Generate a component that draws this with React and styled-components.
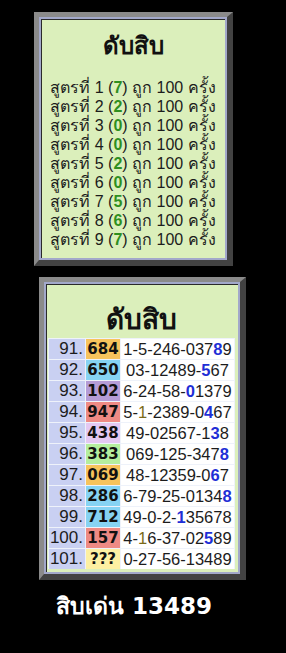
import React from 'react'
import styled, { createGlobalStyle } from 'styled-components'

const Global = createGlobalStyle`
  html, body {
    margin: 0;
    background: #000;
  }
  body {
    font-family: Tahoma, "Liberation Sans", "Noto Sans", sans-serif;
  }
`

const Page = styled.div`
  display: flex;
  flex-direction: column;
  align-items: flex-start;
  padding-top: 12px;
  width: 286px;
  min-height: 653px;
  box-sizing: border-box;
`

const Frame = styled.div`
  box-sizing: border-box;
  width: ${p => p.$w}px;
  margin-left: ${p => p.$left}px;
  margin-bottom: ${p => p.$gap || 0}px;
  border-style: solid;
  border-width: 5px 6px 6px 5px;
  border-color: #8a8a8a #424242 #424242 #8a8a8a;
`

const Inner = styled.div`
  border: 2px solid #a2a8ca;
  box-shadow: inset 1px 1px 0 #2a2a2a;
  background: #dbefbb;
  padding: ${p => p.$pad};
  display: flex;
  flex-direction: column;
  align-items: center;
`

const Title = styled.div`
  font-weight: bold;
  font-size: ${p => p.$size}px;
  color: #111;
  line-height: 1;
  margin: ${p => p.$margin};
`

const Lines = styled.div`
  display: flex;
  flex-direction: column;
  font-size: 16px;
  line-height: 19px;
  color: #1c1c1c;
`

const Hit = styled.b`
  color: #2f8f1f;
`

const Table = styled.div`
  align-self: stretch;
  display: grid;
  grid-template-columns: 36px 34px 1fr;
  grid-auto-rows: 20px;
  gap: 1px;
  background: #eef2fa;
  border: 1px solid #eef2fa;
  border-bottom-width: 0;
`

const NumCell = styled.div`
  background: #c9d0f2;
  font-family: "Liberation Sans", sans-serif;
  font-size: 17px;
  color: #1c1c1c;
  display: flex;
  align-items: center;
  justify-content: flex-end;
  padding-right: 2px;
`

const ColorCell = styled.div`
  background: ${p => p.$bg};
  font-family: "DejaVu Sans", sans-serif;
  font-weight: bold;
  font-size: 15px;
  color: #111;
  display: flex;
  align-items: center;
  justify-content: center;
`

const DigitCell = styled.div`
  background: #fff;
  font-family: "Liberation Sans", sans-serif;
  font-size: 16.5px;
  color: #1c1c1c;
  display: flex;
  align-items: center;
  justify-content: center;
  white-space: pre;
`

const Blue = styled.b`
  color: #1f2fd6;
`

const Olive = styled.span`
  color: #7a6a18;
`

const Caption = styled.div`
  margin: 8px 0 0 56px;
  font-family: "DejaVu Sans", Tahoma, sans-serif;
  font-weight: bold;
  font-size: 23px;
  color: #fff;
`

const formulas = [
  [1, 7], [2, 2], [3, 0], [4, 0], [5, 2], [6, 0], [7, 5], [8, 6], [9, 7],
]

const rows = [
  ['91.', '684', '#f7c35c', [['', '1-5-246-037'], ['b', '8'], ['', '9']]],
  ['92.', '650', '#86d3f3', [['', '03-12489-'], ['b', '5'], ['', '67']]],
  ['93.', '102', '#b59cd6', [['', '6-24-58-'], ['b', '0'], ['', '1379']]],
  ['94.', '947', '#ee8a84', [['', '5-'], ['o', '1'], ['', '-2389-0'], ['b', '4'], ['', '67']]],
  ['95.', '438', '#e4c8f2', [['', '49-02567-1'], ['b', '3'], ['', '8']]],
  ['96.', '383', '#b5ee9e', [['', '069-125-347'], ['b', '8']]],
  ['97.', '069', '#f7c35c', [['', '48-12359-0'], ['b', '6'], ['', '7']]],
  ['98.', '286', '#86d3f3', [['', '6-79-25-0134'], ['b', '8']]],
  ['99.', '712', '#86d3f3', [['', '49-0-2-'], ['b', '1'], ['', '35678']]],
  ['100.', '157', '#ee8a84', [['', '4-'], ['o', '1'], ['', '6-37-02'], ['b', '5'], ['', '89']]],
  ['101.', '???', '#fdf0a2', [['', '0-27-56-13489']]],
]

const renderPart = ([kind, text], i) => {
  if (kind === 'b') return <Blue key={i}>{text}</Blue>
  if (kind === 'o') return <Olive key={i}>{text}</Olive>
  return <span key={i}>{text}</span>
}

export default function App() {
  return (
    <Page>
      <Global />
      <Frame $w={199} $left={34} $gap={11}>
        <Inner $pad="15px 0 9px">
          <Title $size={24} $margin="0 0 20px">ดับสิบ</Title>
          <Lines>
            {formulas.map(([n, v]) => (
              <div key={n}>
                สูตรที่ {n} (<Hit>{v}</Hit>) ถูก 100 ครั้ง
              </div>
            ))}
          </Lines>
        </Inner>
      </Frame>
      <Frame $w={207} $left={39}>
        <Inner $pad="22px 3px 3px 2px">
          <Title $size={28} $margin="0 0 4px">ดับสิบ</Title>
          <Table>
            {rows.map(([n, big, bg, parts]) => (
              <React.Fragment key={n}>
                <NumCell>{n}</NumCell>
                <ColorCell $bg={bg}>{big}</ColorCell>
                <DigitCell>{parts.map(renderPart)}</DigitCell>
              </React.Fragment>
            ))}
          </Table>
        </Inner>
      </Frame>
      <Caption>สิบเด่น 13489</Caption>
    </Page>
  )
}
